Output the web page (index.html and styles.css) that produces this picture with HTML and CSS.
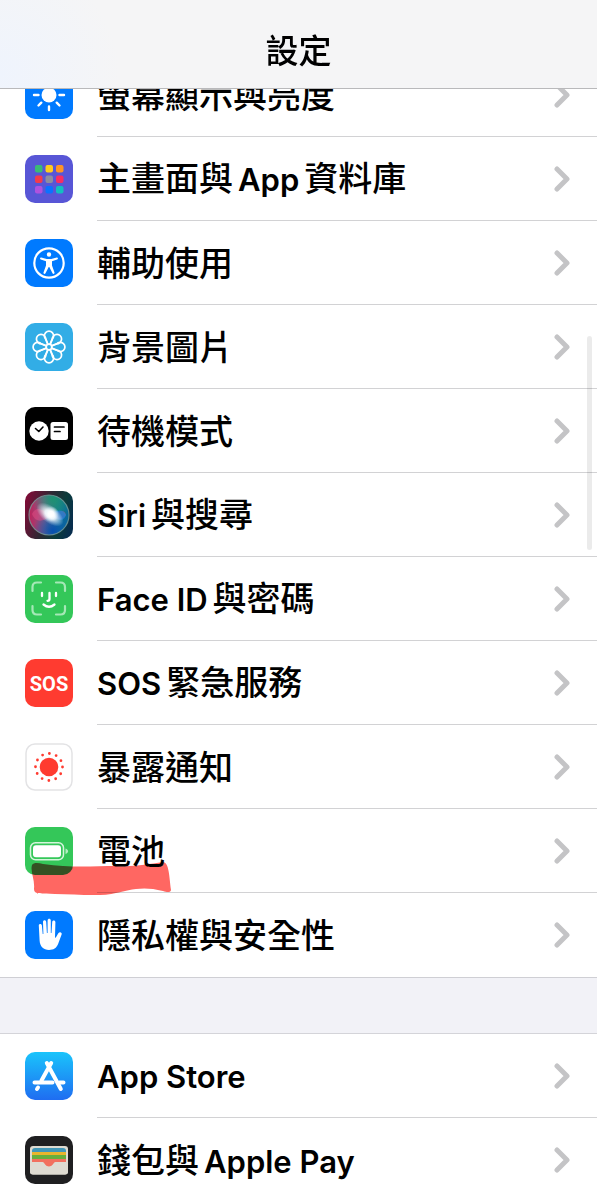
FILE: index.html
```
<!DOCTYPE html>
<html lang="zh-Hant">
<head>
  <meta charset="UTF-8" />
  <meta name="viewport" content="width=device-width, initial-scale=1.0" />
  <title>設定</title>
  <link rel="stylesheet" href="styles.css">
</head>
<body>
  <header class="navbar">
    <h1>設定</h1>
  </header>

  <main class="settings">
    <ul class="group">
      <li>
        <a class="row" href="#display">
          <svg class="icon" viewBox="0 0 48 48" aria-hidden="true">
            <rect width="48" height="48" rx="10" fill="#007aff"/>
            <circle cx="24" cy="24" r="7.500" fill="#fff"/>
            <path d="M24 9v4M24 35.500v3.500M9 24h4.500M34.500 24H39M13.500 13.500l2.800 2.800M31.700 31.700l2.800 2.800M13.500 34.500l2.800-2.800M31.700 16.300l2.800-2.800" stroke="#fff" stroke-width="2.400" stroke-linecap="round"/>
          </svg>
          <span class="body"><span class="label">螢幕顯示與亮度</span><svg class="chevron" viewBox="0 0 16 26"><path d="M3 3l10 10L3 23"/></svg></span>
        </a>
      </li>
      <li>
        <a class="row" href="#home">
          <svg class="icon" viewBox="0 0 48 48" aria-hidden="true">
            <rect width="48" height="48" rx="10" fill="#5856d6"/>
            <rect x="10" y="10" width="7.500" height="7.500" rx="2" fill="#3bbb75"/>
            <rect x="20.500" y="10" width="7.500" height="7.500" rx="2" fill="#ffcc1c"/>
            <rect x="31" y="10" width="7.500" height="7.500" rx="2" fill="#ff9424"/>
            <rect x="10" y="20.500" width="7.500" height="7.500" rx="2" fill="#f43b4b"/>
            <rect x="20.500" y="20.500" width="7.500" height="7.500" rx="2" fill="#8e8e9e"/>
            <rect x="31" y="20.500" width="7.500" height="7.500" rx="2" fill="#f92d62"/>
            <rect x="10" y="31" width="7.500" height="7.500" rx="2" fill="#af52de"/>
            <rect x="20.500" y="31" width="7.500" height="7.500" rx="2" fill="#0a72ff"/>
            <rect x="31" y="31" width="7.500" height="7.500" rx="2" fill="#12bfc0"/>
          </svg>
          <span class="body"><span class="label">主畫面與<span class="latin mid">App</span>資料庫</span><svg class="chevron" viewBox="0 0 16 26"><path d="M3 3l10 10L3 23"/></svg></span>
        </a>
      </li>
      <li>
        <a class="row" href="#accessibility">
          <svg class="icon" viewBox="0 0 48 48" aria-hidden="true">
            <rect width="48" height="48" rx="10" fill="#007aff"/>
            <circle cx="24" cy="24" r="14.700" fill="none" stroke="#fff" stroke-width="2.200"/>
            <circle cx="24" cy="15.500" r="2.200" fill="#fff"/>
            <path d="M16.200 18.600l5.600 1.400h4.400l5.600-1.400c1.300-.2 1.600 1.500.4 1.900l-5.200 1.700v4.200l2.500 7.100c.4 1.400-1.400 2-2 .8L24.300 28h-.6l-3.200 6.300c-.7 1.200-2.400.6-2-.8l2.500-7.100v-4.200l-5.200-1.700c-1.200-.4-.9-2.100.4-1.900z" fill="#fff"/>
          </svg>
          <span class="body"><span class="label">輔助使用</span><svg class="chevron" viewBox="0 0 16 26"><path d="M3 3l10 10L3 23"/></svg></span>
        </a>
      </li>
      <li>
        <a class="row" href="#wallpaper">
          <svg class="icon" viewBox="0 0 48 48" aria-hidden="true">
            <rect width="48" height="48" rx="10" fill="#32ade6"/>
            <g fill="none" stroke="#fff" stroke-width="1.700">
              <path id="petal" d="M22.800 21.200L21 16.500a4.600 4.800 0 1 1 6 0l-1.800 4.700"/>
              <use href="#petal" transform="rotate(45 24 24)"/>
              <use href="#petal" transform="rotate(90 24 24)"/>
              <use href="#petal" transform="rotate(135 24 24)"/>
              <use href="#petal" transform="rotate(180 24 24)"/>
              <use href="#petal" transform="rotate(225 24 24)"/>
              <use href="#petal" transform="rotate(270 24 24)"/>
              <use href="#petal" transform="rotate(315 24 24)"/>
              <circle cx="24" cy="24" r="2.800"/>
            </g>
          </svg>
          <span class="body"><span class="label">背景圖片</span><svg class="chevron" viewBox="0 0 16 26"><path d="M3 3l10 10L3 23"/></svg></span>
        </a>
      </li>
      <li>
        <a class="row" href="#standby">
          <svg class="icon" viewBox="0 0 48 48" aria-hidden="true">
            <rect width="48" height="48" rx="10" fill="#000"/>
            <circle cx="14" cy="24" r="9.700" fill="#fff"/>
            <path d="M10.500 21.500l3.300 3 4.200-4.500" fill="none" stroke="#000" stroke-width="1.600" stroke-linecap="round" stroke-linejoin="round"/>
            <rect x="25.500" y="15" width="17.500" height="18" rx="2.500" fill="#fff"/>
            <path d="M29.500 20h9.500M29.500 24.500h5.500" stroke="#000" stroke-width="1.700" stroke-linecap="round"/>
          </svg>
          <span class="body"><span class="label">待機模式</span><svg class="chevron" viewBox="0 0 16 26"><path d="M3 3l10 10L3 23"/></svg></span>
        </a>
      </li>
      <li>
        <a class="row" href="#siri">
          <svg class="icon" viewBox="0 0 48 48" aria-hidden="true">
            <defs>
              <linearGradient id="siri-bg" x1="0" y1=".3" x2="1" y2=".6">
                <stop offset="0" stop-color="#7b0d36"/>
                <stop offset=".45" stop-color="#2d2833"/>
                <stop offset=".75" stop-color="#0b3c3b"/>
                <stop offset="1" stop-color="#072d4d"/>
              </linearGradient>
              <linearGradient id="siri-orb" x1="0" y1="0" x2="1" y2="0">
                <stop offset="0" stop-color="#c0215b"/>
                <stop offset=".4" stop-color="#80618a"/>
                <stop offset=".7" stop-color="#167e90"/>
                <stop offset="1" stop-color="#07669b"/>
              </linearGradient>
              <radialGradient id="siri-green" cx=".6" cy=".1" r=".5">
                <stop offset="0" stop-color="#1d9271"/>
                <stop offset="1" stop-color="#1d9271" stop-opacity="0"/>
              </radialGradient>
              <radialGradient id="siri-blue" cx=".6" cy=".9" r=".5">
                <stop offset="0" stop-color="#064fb0"/>
                <stop offset="1" stop-color="#064fb0" stop-opacity="0"/>
              </radialGradient>
              <radialGradient id="siri-glow">
                <stop offset="0" stop-color="#fff"/>
                <stop offset=".35" stop-color="#fff" stop-opacity=".9"/>
                <stop offset="1" stop-color="#d8efff" stop-opacity="0"/>
              </radialGradient>
            </defs>
            <rect width="48" height="48" rx="10" fill="url(#siri-bg)"/>
            <circle cx="24" cy="24" r="20" fill="url(#siri-orb)"/>
            <circle cx="24" cy="24" r="20" fill="url(#siri-green)"/>
            <circle cx="24" cy="24" r="20" fill="url(#siri-blue)"/>
            <path d="M7 23c4-9 11-4 18 1 6 4 12 7 16 0-1-6-8-5-15 1-7 5-15 8-19-2z" fill="#ef4e88" opacity=".45"/>
            <path d="M25 24c5-5 13-7 16 0-2 8-10 5-16 0z" fill="#1685dd" opacity=".7"/>
            <ellipse cx="25" cy="23.500" rx="16" ry="8.500" fill="url(#siri-glow)" transform="rotate(38 25 23.500)"/>
            <circle cx="26" cy="23" r="8" fill="url(#siri-glow)"/>
            <circle cx="24" cy="24" r="20" fill="none" stroke="#789b98" stroke-width="1.200" opacity=".8"/>
          </svg>
          <span class="body"><span class="label"><span class="latin start">Siri</span>與搜尋</span><svg class="chevron" viewBox="0 0 16 26"><path d="M3 3l10 10L3 23"/></svg></span>
        </a>
      </li>
      <li>
        <a class="row" href="#faceid">
          <svg class="icon" viewBox="0 0 48 48" aria-hidden="true">
            <rect width="48" height="48" rx="10" fill="#34c759"/>
            <path d="M7.500 16v-4q0-4.500 4.500-4.500h4M31 7.500h4.500q4.500 0 4.500 4.500v4M40 31v4q0 4.500-4.500 4.500H31M16 39.500h-4q-4.500 0-4.500-4.500v-4" fill="none" stroke="#a5e8b6" stroke-width="2.200" stroke-linecap="round"/>
            <path d="M17 18v3M31 18v3M24.500 18v6q0 1.800-2 1.800M18.500 29.500q5.500 4.500 11 0" fill="none" stroke="#fff" stroke-width="2.300" stroke-linecap="round"/>
          </svg>
          <span class="body"><span class="label"><span class="latin start">Face ID</span>與密碼</span><svg class="chevron" viewBox="0 0 16 26"><path d="M3 3l10 10L3 23"/></svg></span>
        </a>
      </li>
      <li>
        <a class="row" href="#sos">
          <span class="icon sos">SOS</span>
          <span class="body"><span class="label"><span class="latin start">SOS</span>緊急服務</span><svg class="chevron" viewBox="0 0 16 26"><path d="M3 3l10 10L3 23"/></svg></span>
        </a>
      </li>
      <li>
        <a class="row" href="#exposure">
          <svg class="icon" viewBox="0 0 48 48" aria-hidden="true">
            <rect x="1" y="1" width="46" height="46" rx="9" fill="#fff" stroke="#e3e3e5" stroke-width="1.500"/>
            <circle cx="24" cy="24" r="9.300" fill="#ff3b30"/>
            <circle cx="24" cy="24" r="13.500" fill="none" stroke="#ff3b30" stroke-width="2.800" stroke-linecap="round" stroke-dasharray="0 7.069"/>
          </svg>
          <span class="body"><span class="label">暴露通知</span><svg class="chevron" viewBox="0 0 16 26"><path d="M3 3l10 10L3 23"/></svg></span>
        </a>
      </li>
      <li class="marked">
        <a class="row" href="#battery">
          <svg class="icon" viewBox="0 0 48 48" aria-hidden="true">
            <rect width="48" height="48" rx="10" fill="#34c759"/>
            <rect x="5.500" y="15.700" width="33" height="17" rx="5" fill="none" stroke="#d5f5dc" stroke-width="1.500"/>
            <rect x="8" y="18.200" width="28" height="12" rx="3" fill="#fff"/>
            <path d="M40.500 21.500c3.500 1 3.500 4.500 0 5.500z" fill="#b4edc2"/>
          </svg>
          <span class="body"><span class="label">電池</span><svg class="chevron" viewBox="0 0 16 26"><path d="M3 3l10 10L3 23"/></svg></span>
        </a>
        <!-- highlighter stroke -->
        <svg class="marker" viewBox="0 0 140 34" aria-hidden="true">
          <path d="M1 3C3 0 8 1 12 2C40 6 62 4 85 4C105 5 117 2 132 0C138 1 138 12 140 28C140 30 137 31 132 29C110 23 96 29 85 31C70 35 44 32 24 32C10 31 3 33 3 27C4 17-1 10 1 3z" fill="#ff6762"/>
        </svg>
      </li>
      <li>
        <a class="row" href="#privacy">
          <svg class="icon" viewBox="0 0 48 48" aria-hidden="true">
            <rect width="48" height="48" rx="10" fill="#007aff"/>
            <path d="M13.800 14.500c0-2 2.900-2 3.100 0l.8 8.500h.7L18 11c0-2.200 3.100-2.200 3.200 0l.7 11h.7V9.500c0-2.200 3.200-2.200 3.200 0V22h.7l.7-11c.1-2.200 3.200-2 3.200.1L30 26.500l.7.300 2.600-4.600c1.200-2 4.200-1 3.300 1.400l-3.400 9.200C31.500 37.300 28.500 39 24 39c-5.500 0-9-3.400-9.400-9.500z" fill="#fff"/>
          </svg>
          <span class="body"><span class="label">隱私權與安全性</span><svg class="chevron" viewBox="0 0 16 26"><path d="M3 3l10 10L3 23"/></svg></span>
        </a>
      </li>
    </ul>

    <ul class="group">
      <li>
        <a class="row" href="#appstore">
          <svg class="icon" viewBox="0 0 48 48" aria-hidden="true">
            <defs>
              <linearGradient id="store-bg" x1="0" y1="0" x2="0" y2="1">
                <stop offset="0" stop-color="#1ac4fb"/>
                <stop offset="1" stop-color="#1f6df1"/>
              </linearGradient>
            </defs>
            <rect width="48" height="48" rx="10" fill="url(#store-bg)"/>
            <g fill="none" stroke="#fff" stroke-width="4" stroke-linecap="round">
              <path d="M26.200 11L16.500 28.500M21.800 11l14 26"/>
              <path d="M9.500 30.500h18M34.500 30.500h4M13 35.500l-1 1.500"/>
            </g>
          </svg>
          <span class="body"><span class="label"><span class="latin">App Store</span></span><svg class="chevron" viewBox="0 0 16 26"><path d="M3 3l10 10L3 23"/></svg></span>
        </a>
      </li>
      <li>
        <a class="row" href="#wallet">
          <svg class="icon" viewBox="0 0 48 48" aria-hidden="true">
            <rect width="48" height="48" rx="10" fill="#1f1f21"/>
            <rect x="5" y="10" width="38" height="28.500" rx="3" fill="#dedbd2"/>
            <path d="M7 15q0-3 3-3h28q3 0 3 3v2H7z" fill="#4297b8"/>
            <path d="M7 16h34v4H7z" fill="#e9b52d"/>
            <path d="M7 19h34v5H7z" fill="#67af3d"/>
            <path d="M7 23h34v3.500H30.500c-2.200 0-2.200 4.500-6.500 4.500s-4.300-4.500-6.500-4.500H7z" fill="#f2705f"/>
            <path d="M5 26h12.500c2.200 0 2.200 4.500 6.500 4.500s4.300-4.500 6.500-4.500H43v9.500q0 3-3 3H8q-3 0-3-3z" fill="#dedbd2"/>
          </svg>
          <span class="body"><span class="label">錢包與<span class="latin mid">Apple Pay</span></span><svg class="chevron" viewBox="0 0 16 26"><path d="M3 3l10 10L3 23"/></svg></span>
        </a>
      </li>
    </ul>
  </main>

  <div class="scroll-thumb"></div>
</body>
</html>
```
FILE: styles.css
```
* {
  box-sizing: border-box;
}
body {
  margin: 0;
  background: #f2f2f7;
  color: #000;
  font-family: Inter, "Noto Sans CJK TC", sans-serif;
}
.navbar {
  position: fixed;
  z-index: 2;
  top: 0;
  left: 0;
  right: 0;
  height: 89px;
  padding-top: 26px;
  background: radial-gradient(circle at 0 85%, #eff4fd, #f5f5f6 120px);
  border-bottom: 1px solid #b9b9bb;
  text-align: center;
}
.navbar h1 {
  margin: 0;
  font-size: 33px;
  font-weight: 500;
  line-height: 50px;
}
/* list is scrolled part way under the bar */
.settings {
  height: 100vh;
  padding-top: 53px;
  overflow: hidden;
}
.group {
  margin: 0 0 55px;
  padding: 0;
  list-style: none;
  background: #fff;
  border-bottom: 1px solid #cfcfd4;
}
.group + .group {
  border-top: 1px solid #d4d4d9;
}
.row {
  display: flex;
  align-items: center;
  gap: 24px;
  height: 84px;
  padding-left: 25px;
  color: inherit;
  text-decoration: none;
}
.icon {
  flex: none;
  width: 48px;
  height: 48px;
}
.sos {
  border-radius: 10px;
  background: #ff3b30;
  color: #fff;
  font-family: Roboto, sans-serif;
  font-size: 20px;
  font-weight: 700;
  line-height: 50px;
  text-align: center;
}
.body {
  flex: 1;
  display: flex;
  align-items: center;
  justify-content: space-between;
  height: 100%;
  padding-right: 27px;
  border-bottom: 1px solid #d2d2d4;
}
li:last-child .body {
  border-bottom: 0;
}
.label {
  padding-top: 2px;
  font-size: 34px;
  font-weight: 500;
  line-height: 50px;
}
.latin {
  font-size: 31px;
  font-weight: 600;
}
.latin.mid {
  margin: 0 5px;
}
.latin.start {
  margin-right: 5px;
}
.chevron {
  width: 16px;
  height: 26px;
  fill: none;
  stroke: #c4c4c6;
  stroke-width: 5;
  stroke-linecap: round;
  stroke-linejoin: round;
}
.marked {
  position: relative;
}
.marker {
  position: absolute;
  z-index: 1;
  left: 31px;
  bottom: -3px;
  width: 140px;
  height: 34px;
  mix-blend-mode: multiply;
}
.scroll-thumb {
  position: fixed;
  top: 336px;
  right: 5px;
  width: 5px;
  height: 214px;
  border-radius: 3px;
  background: rgba(0, 0, 0, 0.08);
}
```
